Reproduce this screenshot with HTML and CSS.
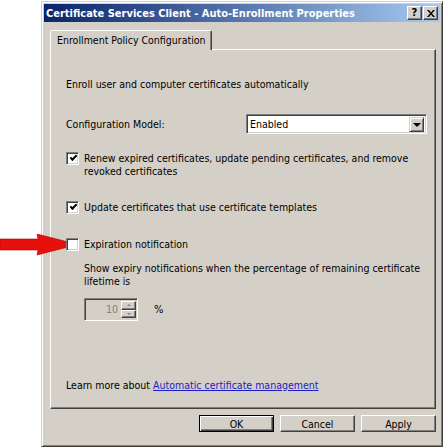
FILE: index.html
```html
<!DOCTYPE html>
<html>
<head>
<meta charset="utf-8">
<link rel="stylesheet" href="styles.css">
</head>
<body>
<div class="stage">
  <svg class="arrow" width="80" height="22" viewBox="0 0 80 22">
    <polygon points="0,5 38,5 37,0 78,10.5 37,21 38,16 0,16" fill="#e8100c" stroke="#b00000" stroke-width="0.6"/>
  </svg>
  <div class="window">
    <div class="titlebar">
      <span class="title">Certificate Services Client - Auto-Enrollment Properties</span>
      <div class="tbtns">
        <span class="tbtn">?</span>
        <span class="tbtn tclose">
          <svg width="8" height="7" viewBox="0 0 8 7"><path d="M0 0h2l2 2.5L6 0h2L5 3.5 8 7H6L4 4.5 2 7H0l3-3.5z" fill="#000"/></svg>
        </span>
      </div>
    </div>
    <div class="tabs">
      <div class="tab">Enrollment Policy Configuration</div>
    </div>
    <div class="panel">
      <div class="row r-enroll">Enroll user and computer certificates automatically</div>
      <div class="row r-config">
        <span class="label">Configuration Model:</span>
        <div class="combo">
          <span class="combo-text">Enabled</span>
          <span class="combo-btn"><span class="tri"></span></span>
        </div>
      </div>
      <div class="check r-renew">
        <span class="box checked"></span>
        <span class="ctext">Renew expired certificates, update pending certificates, and remove revoked certificates</span>
      </div>
      <div class="check r-update">
        <span class="box checked"></span>
        <span class="ctext">Update certificates that use certificate templates</span>
      </div>
      <div class="check r-expire">
        <span class="box"></span>
        <span class="ctext">Expiration notification</span>
      </div>
      <div class="r-show">Show expiry notifications when the percentage of remaining certificate lifetime is</div>
      <div class="r-spin">
        <div class="spin">
          <span class="spin-val">10</span>
          <div class="spin-btns">
            <span class="sbtn"><span class="up"></span></span>
            <span class="sbtn"><span class="down"></span></span>
          </div>
        </div>
        <span class="pct">%</span>
      </div>
      <div class="r-learn">Learn more about <a class="link" href="#">Automatic certificate management</a></div>
    </div>
    <div class="buttons">
      <span class="btn default">OK</span>
      <span class="btn">Cancel</span>
      <span class="btn">Apply</span>
    </div>
  </div>
</div>
</body>
</html>
```
FILE: styles.css
```css
html, body {
  margin: 0;
  padding: 0;
  background: #fff;
}
body {
  width: 445px;
  height: 448px;
  overflow: hidden;
  font-family: "DejaVu Sans Condensed", "DejaVu Sans", sans-serif;
  font-size: 10.5px;
  color: #000;
}
.stage {
  position: relative;
  width: 445px;
  height: 448px;
}
.arrow {
  position: absolute;
  left: 0;
  top: 233px;
}
.window {
  box-sizing: border-box;
  width: 402px;
  height: 446px;
  margin: 1px 0 0 41px;
  background: #d4d0c8;
  border: 1px solid;
  border-color: #d4d0c8 #404040 #404040 #d4d0c8;
  box-shadow: inset 1px 1px #fff, inset -1px -1px #808080;
  padding: 2px;
  display: flex;
  flex-direction: column;
}
.titlebar {
  height: 18px;
  background: linear-gradient(to right, #0a246a, #a6caf0);
  display: flex;
  align-items: center;
  justify-content: space-between;
  padding: 0 2px 0 2px;
}
.title {
  color: #fff;
  font-weight: bold;
  font-size: 11px;
}
.tbtns {
  display: flex;
  gap: 1px;
}
.tbtn {
  box-sizing: border-box;
  width: 15px;
  height: 14px;
  background: #d4d0c8;
  border: 1px solid;
  border-color: #fff #404040 #404040 #fff;
  box-shadow: inset -1px -1px #808080;
  display: flex;
  align-items: center;
  justify-content: center;
  font-family: "DejaVu Sans", sans-serif;
  font-weight: bold;
  font-size: 10px;
  line-height: 1;
}
.tabs {
  display: flex;
  padding: 8px 0 0 6px;
}
.tab {
  box-sizing: border-box;
  height: 20px;
  width: 162px;
  padding: 3px 0 0 6px;
  border: 1px solid;
  border-bottom: none;
  border-color: #fff #404040 transparent #fff;
  box-shadow: inset -1px 0 #808080;
  border-radius: 2px 2px 0 0;
  margin-bottom: -1px;
  position: relative;
  z-index: 1;
  background: #d4d0c8;
  line-height: 13px;
}
.panel {
  box-sizing: border-box;
  width: 386px;
  height: 360px;
  margin-left: 6px;
  border: 1px solid;
  border-color: #fff #404040 #404040 #fff;
  box-shadow: inset -1px -1px #808080;
  padding: 28px 8px 16px 15px;
  display: flex;
  flex-direction: column;
  line-height: 13px;
}
.row {
  display: flex;
  align-items: center;
}
.r-config {
  margin-top: 23px;
  height: 20px;
}
.label {
  width: 180px;
}
.combo {
  box-sizing: border-box;
  width: 181px;
  height: 20px;
  background: #fff;
  border: 1px solid;
  border-color: #808080 #fff #fff #808080;
  box-shadow: inset 1px 1px #404040, inset -1px -1px #d4d0c8;
  display: flex;
  align-items: center;
  justify-content: space-between;
  padding: 2px 2px 2px 3px;
}
.combo-btn {
  box-sizing: border-box;
  width: 15px;
  height: 15px;
  background: #d4d0c8;
  border: 1px solid;
  border-color: #d4d0c8 #404040 #404040 #d4d0c8;
  box-shadow: inset 1px 1px #fff, inset -1px -1px #808080;
  display: flex;
  align-items: center;
  justify-content: center;
}
.tri {
  width: 0;
  height: 0;
  border-left: 4px solid transparent;
  border-right: 4px solid transparent;
  border-top: 4px solid #000;
  margin-top: 1px;
}
.check {
  display: flex;
  align-items: flex-start;
  gap: 5px;
}
.r-renew { margin-top: 18px; }
.r-update { margin-top: 23px; }
.r-expire { margin-top: 24px; }
.box {
  box-sizing: border-box;
  flex: none;
  width: 13px;
  height: 13px;
  background: #fff;
  border: 1px solid;
  border-color: #808080 #fff #fff #808080;
  box-shadow: inset 1px 1px #404040, inset -1px -1px #d4d0c8;
  position: relative;
}
.box.checked::after {
  content: "";
  position: absolute;
  left: 3px;
  top: 2px;
  width: 5px;
  height: 2px;
  border-left: 2px solid #000;
  border-bottom: 2px solid #000;
  transform: rotate(-45deg);
  transform-origin: center;
}
.ctext {
  width: 345px;
}
.r-show {
  margin: 11px 0 0 18px;
  width: 350px;
}
.r-spin {
  margin: 10px 0 0 18px;
  display: flex;
  align-items: center;
  gap: 16px;
}
.spin {
  box-sizing: border-box;
  width: 54px;
  height: 23px;
  border: 1px solid;
  border-color: #808080 #fff #fff #808080;
  box-shadow: inset 1px 1px #404040, inset -1px -1px #d4d0c8;
  display: flex;
  align-items: center;
  justify-content: flex-end;
  padding: 2px 1px 2px 2px;
  gap: 3px;
}
.spin-val {
  color: #808080;
}
.spin-btns {
  display: flex;
  flex-direction: column;
  height: 17px;
}
.sbtn {
  box-sizing: border-box;
  width: 15px;
  height: 9px;
  flex: 1;
  background: #d4d0c8;
  border: 1px solid;
  border-color: #fff #404040 #404040 #fff;
  box-shadow: inset -1px -1px #808080;
  display: flex;
  align-items: center;
  justify-content: center;
}
.up, .down {
  width: 0;
  height: 0;
  border-left: 2px solid transparent;
  border-right: 2px solid transparent;
}
.up { border-bottom: 2px solid #808080; }
.down { border-top: 2px solid #808080; }
.pct {
  font-size: 11px;
}
.r-learn {
  margin-top: auto;
}
.link {
  color: #1c1cc8;
  text-decoration: underline;
}
.buttons {
  display: flex;
  justify-content: flex-end;
  gap: 6px;
  padding: 6px 4px 0 0;
}
.btn {
  box-sizing: border-box;
  width: 75px;
  height: 17px;
  border: 1px solid;
  border-color: #fff #404040 #404040 #fff;
  box-shadow: inset -1px -1px #808080;
  display: flex;
  align-items: center;
  justify-content: center;
}
.btn.default {
  border-color: #000;
  box-shadow: inset 1px 1px #fff, inset -1px -1px #404040, inset -2px -2px #808080;
}
```
